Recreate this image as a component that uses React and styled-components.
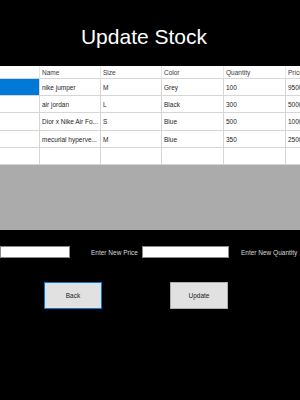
import React from "react";
import styled, { createGlobalStyle } from "styled-components";

const GlobalStyle = createGlobalStyle`
  html, body {
    margin: 0;
    padding: 0;
    background: #000;
  }
  body {
    font-family: "Liberation Sans", Arial, sans-serif;
  }
`;

const Frame = styled.div`
  width: 300px;
  height: 400px;
  background: #000;
  overflow: hidden;
`;

const Title = styled.h1`
  box-sizing: border-box;
  height: 66px;
  margin: 0;
  padding: 25px 12px 0 0;
  text-align: center;
  font-size: 21px;
  font-weight: normal;
  color: #fff;
  line-height: normal;
`;

const GridArea = styled.div`
  height: 164px;
  background: #ababab;
  overflow: hidden;
`;

const Table = styled.div`
  display: grid;
  grid-template-columns: 40px 61px 61px 62px 62px 62px;
  grid-template-rows: 13px 17px 17px 18px 17px 17px;
  width: 348px;
  background: #fff;
`;

const Cell = styled.div`
  box-sizing: border-box;
  display: flex;
  align-items: center;
  padding-left: 2px;
  font-size: 6.5px;
  white-space: nowrap;
  overflow: hidden;
  color: ${(p) => (p.$head ? "#3a3a3a" : "#1e1e1e")};
  background: ${(p) => (p.$selected ? "#0078d7" : "#fff")};
  border-right: 1px solid ${(p) => (p.$head ? "#e6e6e6" : "#d6d6d6")};
  border-bottom: 1px solid #d6d6d6;
`;

const InputRow = styled.div`
  display: flex;
  align-items: center;
  margin-top: 16px;
  height: 12px;
`;

const TextBox = styled.div`
  box-sizing: border-box;
  width: ${(p) => p.$w}px;
  height: 12px;
  background: #fff;
  border: 1px solid #8a8a8a;
  margin-left: ${(p) => p.$ml || 0}px;
`;

const Label = styled.span`
  font-size: 6.5px;
  color: #d8d8d8;
  white-space: nowrap;
  margin-left: ${(p) => p.$ml || 0}px;
`;

const ButtonRow = styled.div`
  display: flex;
  margin-top: 24px;
  padding-left: 44px;
  gap: 68px;
`;

const Button = styled.button`
  box-sizing: border-box;
  width: 58px;
  height: 27px;
  margin: 0;
  padding: 0;
  background: #e1e1e1;
  border: 1px solid ${(p) => (p.$focused ? "#0078d7" : "#adadad")};
  font-family: "Liberation Sans", Arial, sans-serif;
  font-size: 6.5px;
  color: #222;
`;

const columns = ["", "Name", "Size", "Color", "Quantity", "Price"];

const stock = [
  { name: "nike jumper", size: "M", color: "Grey", qty: "100", price: "9500" },
  { name: "air jordan", size: "L", color: "Black", qty: "300", price: "5000" },
  { name: "Dior x Nike Air Fo...", size: "S", color: "Blue", qty: "500", price: "1000" },
  { name: "mecurial hyperve...", size: "M", color: "Blue", qty: "350", price: "2500" },
];

export default function App() {
  return (
    <Frame>
      <GlobalStyle />
      <Title>Update Stock</Title>
      <GridArea>
        <Table>
          {columns.map((c, i) => (
            <Cell key={"h" + i} $head>
              {c}
            </Cell>
          ))}
          {stock.map((row, r) => (
            <React.Fragment key={r}>
              <Cell $selected={r === 0} />
              <Cell>{row.name}</Cell>
              <Cell>{row.size}</Cell>
              <Cell>{row.color}</Cell>
              <Cell>{row.qty}</Cell>
              <Cell>{row.price}</Cell>
            </React.Fragment>
          ))}
          {columns.map((c, i) => (
            <Cell key={"n" + i} />
          ))}
        </Table>
      </GridArea>
      <InputRow>
        <TextBox $w={70} />
        <Label $ml={21}>Enter New Price</Label>
        <TextBox $w={87} $ml={4} />
        <Label $ml={12}>Enter New Quantity</Label>
      </InputRow>
      <ButtonRow>
        <Button $focused>Back</Button>
        <Button>Update</Button>
      </ButtonRow>
    </Frame>
  );
}
